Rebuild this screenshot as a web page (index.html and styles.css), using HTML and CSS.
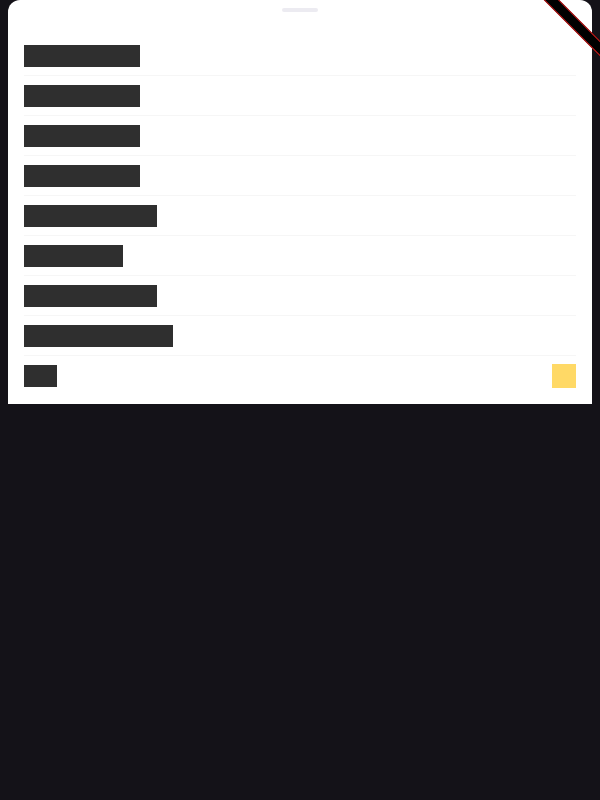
FILE: index.html
```html
<!DOCTYPE html>
<html>
<head>
<meta charset="utf-8">
<link rel="stylesheet" href="styles.css">
</head>
<body>
<div class="sheet">
  <div class="handle"></div>
  <div class="list">
    <div class="row"><span class="txt" style="width:116px"></span></div>
    <div class="row"><span class="txt" style="width:116px"></span></div>
    <div class="row"><span class="txt" style="width:116px"></span></div>
    <div class="row"><span class="txt" style="width:116px"></span></div>
    <div class="row"><span class="txt" style="width:132.6px"></span></div>
    <div class="row"><span class="txt" style="width:99.4px"></span></div>
    <div class="row"><span class="txt" style="width:132.6px"></span></div>
    <div class="row"><span class="txt" style="width:149.1px"></span></div>
    <div class="row last"><span class="txt" style="width:33.1px"></span><span class="swatch"></span></div>
  </div>
</div>
<div class="banner"></div>
</body>
</html>
```
FILE: styles.css
```css
html, body {
  margin: 0;
  padding: 0;
}
body {
  background: #141218;
  width: 600px;
  height: 800px;
  overflow: hidden;
  position: relative;
}
.sheet {
  margin: 0 8px;
  background: #ffffff;
  border-radius: 12px 12px 0 0;
  padding: 8px 0 8px;
}
.handle {
  width: 36px;
  height: 4px;
  border-radius: 2px;
  background: #ecebf1;
  margin: 0 auto 24px;
}
.list {
  margin: 0 16px;
  display: flex;
  flex-direction: column;
}
.row {
  height: 40px;
  display: flex;
  align-items: center;
  justify-content: space-between;
  box-shadow: inset 0 -1px 0 #f6f6f6;
}
.row.last {
  box-shadow: none;
}
.txt {
  display: block;
  height: 22px;
  background: #2f2f2f;
}
.swatch {
  display: block;
  width: 24px;
  height: 24px;
  background: #ffd966;
}
.banner {
  position: absolute;
  left: 516px;
  top: 18.5px;
  width: 120px;
  height: 9px;
  background: #000;
  border-top: 1px solid #d01c1c;
  border-bottom: 1px solid #d01c1c;
  transform: rotate(45deg);
}
```
